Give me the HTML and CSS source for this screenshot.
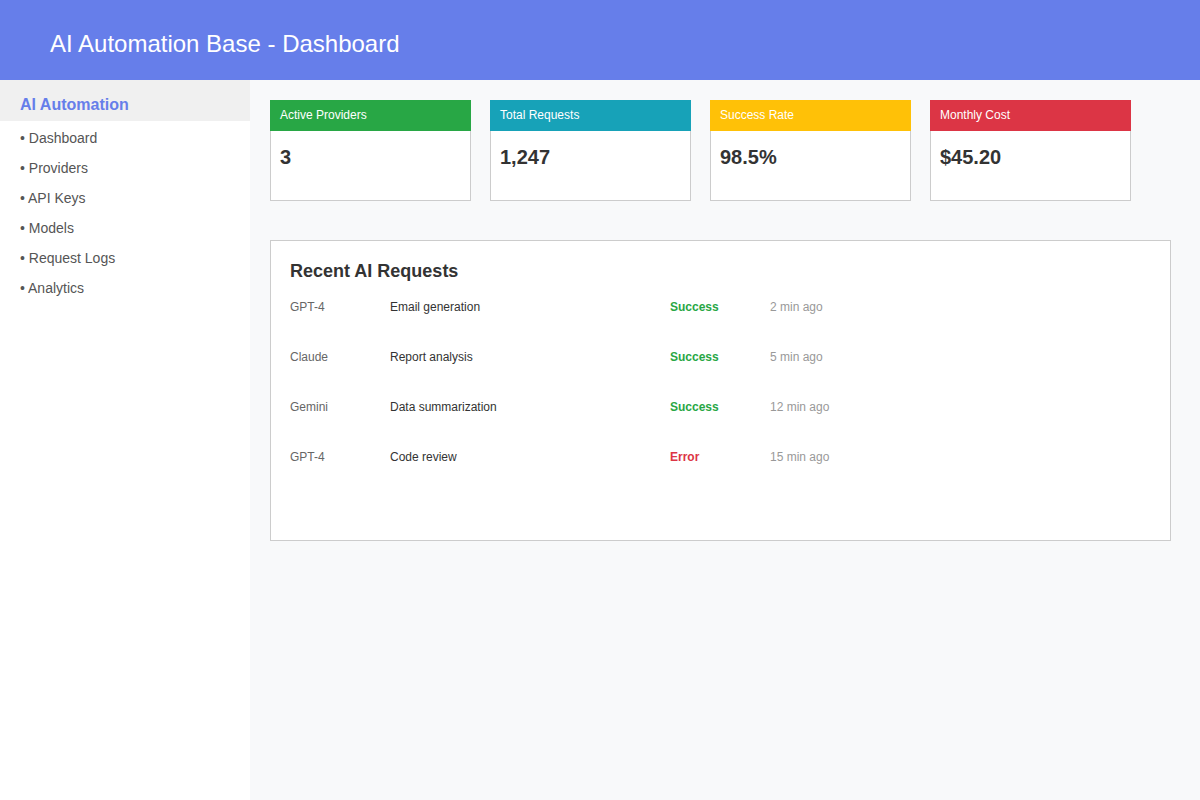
FILE: index.html
```html
<!DOCTYPE html>
<html lang="en">
<head>
<meta charset="utf-8">
<title>AI Automation Base - Dashboard</title>
<link rel="stylesheet" href="styles.css">
</head>
<body>
<header class="topbar">
  <h1 class="topbar-title">AI Automation Base - Dashboard</h1>
</header>
<div class="layout">
  <aside class="sidebar">
    <div class="sidebar-title">AI Automation</div>
    <ul class="nav">
      <li class="nav-item">• Dashboard</li>
      <li class="nav-item">• Providers</li>
      <li class="nav-item">• API Keys</li>
      <li class="nav-item">• Models</li>
      <li class="nav-item">• Request Logs</li>
      <li class="nav-item">• Analytics</li>
    </ul>
  </aside>
  <main class="main">
    <section class="stats">
      <div class="stat">
        <div class="stat-head green">Active Providers</div>
        <div class="stat-body">3</div>
      </div>
      <div class="stat">
        <div class="stat-head teal">Total Requests</div>
        <div class="stat-body">1,247</div>
      </div>
      <div class="stat">
        <div class="stat-head yellow">Success Rate</div>
        <div class="stat-body">98.5%</div>
      </div>
      <div class="stat">
        <div class="stat-head red">Monthly Cost</div>
        <div class="stat-body">$45.20</div>
      </div>
    </section>
    <section class="panel">
      <h2 class="panel-title">Recent AI Requests</h2>
      <div class="row">
        <span class="col-model">GPT-4</span>
        <span class="col-task">Email generation</span>
        <span class="col-status ok">Success</span>
        <span class="col-time">2 min ago</span>
      </div>
      <div class="row">
        <span class="col-model">Claude</span>
        <span class="col-task">Report analysis</span>
        <span class="col-status ok">Success</span>
        <span class="col-time">5 min ago</span>
      </div>
      <div class="row">
        <span class="col-model">Gemini</span>
        <span class="col-task">Data summarization</span>
        <span class="col-status ok">Success</span>
        <span class="col-time">12 min ago</span>
      </div>
      <div class="row">
        <span class="col-model">GPT-4</span>
        <span class="col-task">Code review</span>
        <span class="col-status err">Error</span>
        <span class="col-time">15 min ago</span>
      </div>
    </section>
  </main>
</div>
</body>
</html>
```

FILE: styles.css
```css
* { box-sizing: border-box; }

html, body {
  margin: 0;
  padding: 0;
  height: 100%;
}

body {
  font-family: "Liberation Sans", Arial, sans-serif;
  color: #333;
  background: #f8f9fa;
  display: flex;
  flex-direction: column;
}

.topbar {
  height: 80px;
  background: #667eea;
  padding: 30px 50px 0;
  flex: none;
}

.topbar-title {
  margin: 0;
  font-size: 24px;
  line-height: 28px;
  font-weight: normal;
  color: #fff;
}

.layout {
  flex: 1;
  display: flex;
}

.sidebar {
  width: 250px;
  flex: none;
  background: #fff;
}

.sidebar-title {
  background: #f0f0f0;
  color: #667eea;
  font-weight: bold;
  font-size: 16px;
  line-height: 17px;
  padding: 16px 20px 8px;
}

.nav {
  list-style: none;
  margin: 0;
  padding: 2px 0 0;
}

.nav-item {
  font-size: 14px;
  line-height: 14px;
  padding: 8px 20px;
  color: #555;
}

.main {
  flex: 1;
  padding: 20px 20px;
}

.stats {
  display: flex;
  gap: 19px;
}

.stat {
  width: 201px;
}

.stat-head {
  height: 31px;
  padding: 8px 10px;
  font-size: 12px;
  line-height: 15px;
  color: #fff;
}

.green { background: #28a745; }
.teal { background: #17a2b8; }
.yellow { background: #ffc107; }
.red { background: #dc3545; }

.stat-body {
  height: 70px;
  background: #fff;
  border: 1px solid #ccc;
  border-top: none;
  padding: 15px 9px 0;
  font-size: 20px;
  line-height: 23px;
  font-weight: bold;
  color: #333;
}

.panel {
  margin-top: 39px;
  width: 901px;
  height: 301px;
  background: #fff;
  border: 1px solid #ccc;
  padding: 19px 19px;
}

.panel-title {
  margin: 0 0 18px;
  font-size: 18px;
  line-height: 22px;
  font-weight: bold;
  color: #333;
}

.row {
  display: flex;
  height: 50px;
  font-size: 12px;
  line-height: 14px;
}

.col-model { width: 100px; color: #666; }
.col-task { width: 280px; color: #333; }
.col-status { width: 100px; font-weight: bold; }
.col-status.ok { color: #28a745; }
.col-status.err { color: #dc3545; }
.col-time { color: #999; }
```
